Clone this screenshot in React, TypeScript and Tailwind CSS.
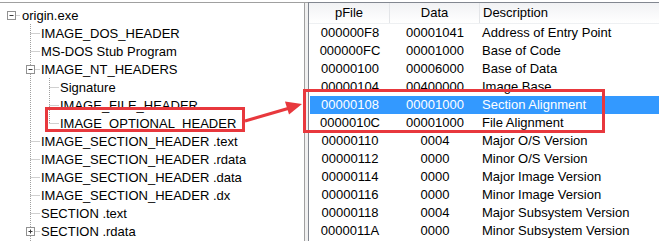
import React from "react";

type Node = {
  label: string;
  level: number;
  box?: "minus" | "plus";
  last?: boolean;
  rails?: number[]; // ancestor levels whose line passes through this row
};

const treeRows: Node[] = [
  { label: "origin.exe", level: 0, box: "minus" },
  { label: "IMAGE_DOS_HEADER", level: 1 },
  { label: "MS-DOS Stub Program", level: 1 },
  { label: "IMAGE_NT_HEADERS", level: 1, box: "minus" },
  { label: "Signature", level: 2, rails: [1] },
  { label: "IMAGE_FILE_HEADER", level: 2, rails: [1] },
  { label: "IMAGE_OPTIONAL_HEADER", level: 2, rails: [1], last: true },
  { label: "IMAGE_SECTION_HEADER .text", level: 1 },
  { label: "IMAGE_SECTION_HEADER .rdata", level: 1 },
  { label: "IMAGE_SECTION_HEADER .data", level: 1 },
  { label: "IMAGE_SECTION_HEADER .dx", level: 1 },
  { label: "SECTION .text", level: 1 },
  { label: "SECTION .rdata", level: 1, box: "plus" },
];

const tableRows = [
  ["000000F8", "00001041", "Address of Entry Point"],
  ["000000FC", "00001000", "Base of Code"],
  ["00000100", "00006000", "Base of Data"],
  ["00000104", "00400000", "Image Base"],
  ["00000108", "00001000", "Section Alignment"],
  ["0000010C", "00001000", "File Alignment"],
  ["00000110", "0004", "Major O/S Version"],
  ["00000112", "0000", "Minor O/S Version"],
  ["00000114", "0000", "Major Image Version"],
  ["00000116", "0000", "Minor Image Version"],
  ["00000118", "0004", "Major Subsystem Version"],
  ["0000011A", "0000", "Minor Subsystem Version"],
];

const CELL = 19;

const Gutter = ({ node }: { node: Node }) => {
  const w = CELL * (node.level + 1);
  const cx = CELL * node.level + 9.5;
  const dot = { stroke: "#a0a0a0", strokeWidth: 1, strokeDasharray: "1 1" };
  return (
    <svg width={w} height={18} className="shrink-0">
      {(node.rails || []).map((l) => (
        <line key={l} x1={CELL * l + 9.5} y1={0} x2={CELL * l + 9.5} y2={18} {...dot} />
      ))}
      {node.level > 0 && (
        <line x1={cx} y1={0} x2={cx} y2={node.last ? 9 : 18} {...dot} />
      )}
      <line x1={node.level === 0 ? cx + 5 : cx} y1={9.5} x2={cx + 9} y2={9.5} {...dot} />
      {node.box && (
        <g>
          <rect x={cx - 4} y={5.5} width={8} height={8} fill="#fff" stroke="#919191" />
          <line x1={cx - 2} y1={9.5} x2={cx + 2} y2={9.5} stroke="#3a3a3a" />
          {node.box === "plus" && (
            <line x1={cx} y1={7.5} x2={cx} y2={11.5} stroke="#3a3a3a" />
          )}
        </g>
      )}
    </svg>
  );
};

export default function App() {
  return (
    <div
      className="relative w-[659px] h-[241px] overflow-hidden bg-white pt-[2px] flex text-[13px] text-black"
      style={{ fontFamily: '"Liberation Sans", Arial, sans-serif' }}
    >
      {/* tree panel */}
      <div className="w-[305px] shrink-0 border-t border-r border-[#a0a0a0] pt-[3px] pl-[2px]">
        {treeRows.map((n, i) => (
          <div key={i} className="flex items-center h-[18px] leading-none">
            <Gutter node={n} />
            <span className="pl-px whitespace-nowrap">{n.label}</span>
          </div>
        ))}
        <div className="flex h-[18px]">
          <svg width={38} height={18}>
            <line x1={28.5} y1={0} x2={28.5} y2={18} stroke="#a0a0a0" strokeDasharray="1 1" />
          </svg>
        </div>
      </div>

      <div className="w-[3px] shrink-0 bg-[#f0f0f0] border-t border-[#a0a0a0]" />

      {/* list panel */}
      <div className="flex-1 border-t border-l border-[#828790]">
        <div className="flex h-[21px] items-center bg-gradient-to-b from-[#f1f2f4] to-white border-b border-[#eef0f2]">
          <div className="w-[81px] text-center border-r border-[#e3e5e8] h-full flex items-center justify-center">pFile</div>
          <div className="w-[90px] text-center border-r border-[#e3e5e8] h-full flex items-center justify-center">Data</div>
          <div className="flex-1 pl-[3px]">Description</div>
        </div>
        {tableRows.map((r, i) => (
          <div
            key={i}
            className={
              i === 4
                ? "flex h-[18px] items-center bg-[#3399ff] text-white ml-px"
                : "flex h-[18px] items-center ml-px"
            }
          >
            <div className="w-[80px] text-center">{r[0]}</div>
            <div className="w-[90px] text-center">{r[1]}</div>
            <div className="flex-1 pl-[2px] whitespace-nowrap">{r[2]}</div>
          </div>
        ))}
      </div>

      {/* annotations */}
      <div className="absolute left-[45px] top-[107px] w-[200px] h-[25px] border-[3px] border-[#e8383d]" />
      <div className="absolute left-[303px] top-[89px] w-[302px] h-[44px] border-[3px] border-[#e8383d]" />
      <svg className="absolute left-0 top-0" width={659} height={241}>
        <line x1={245} y1={121} x2={288} y2={108.5} stroke="#e8383d" strokeWidth={3} />
        <polygon points="302,104 285,101.5 289,114.5" fill="#e8383d" />
      </svg>
    </div>
  );
}
